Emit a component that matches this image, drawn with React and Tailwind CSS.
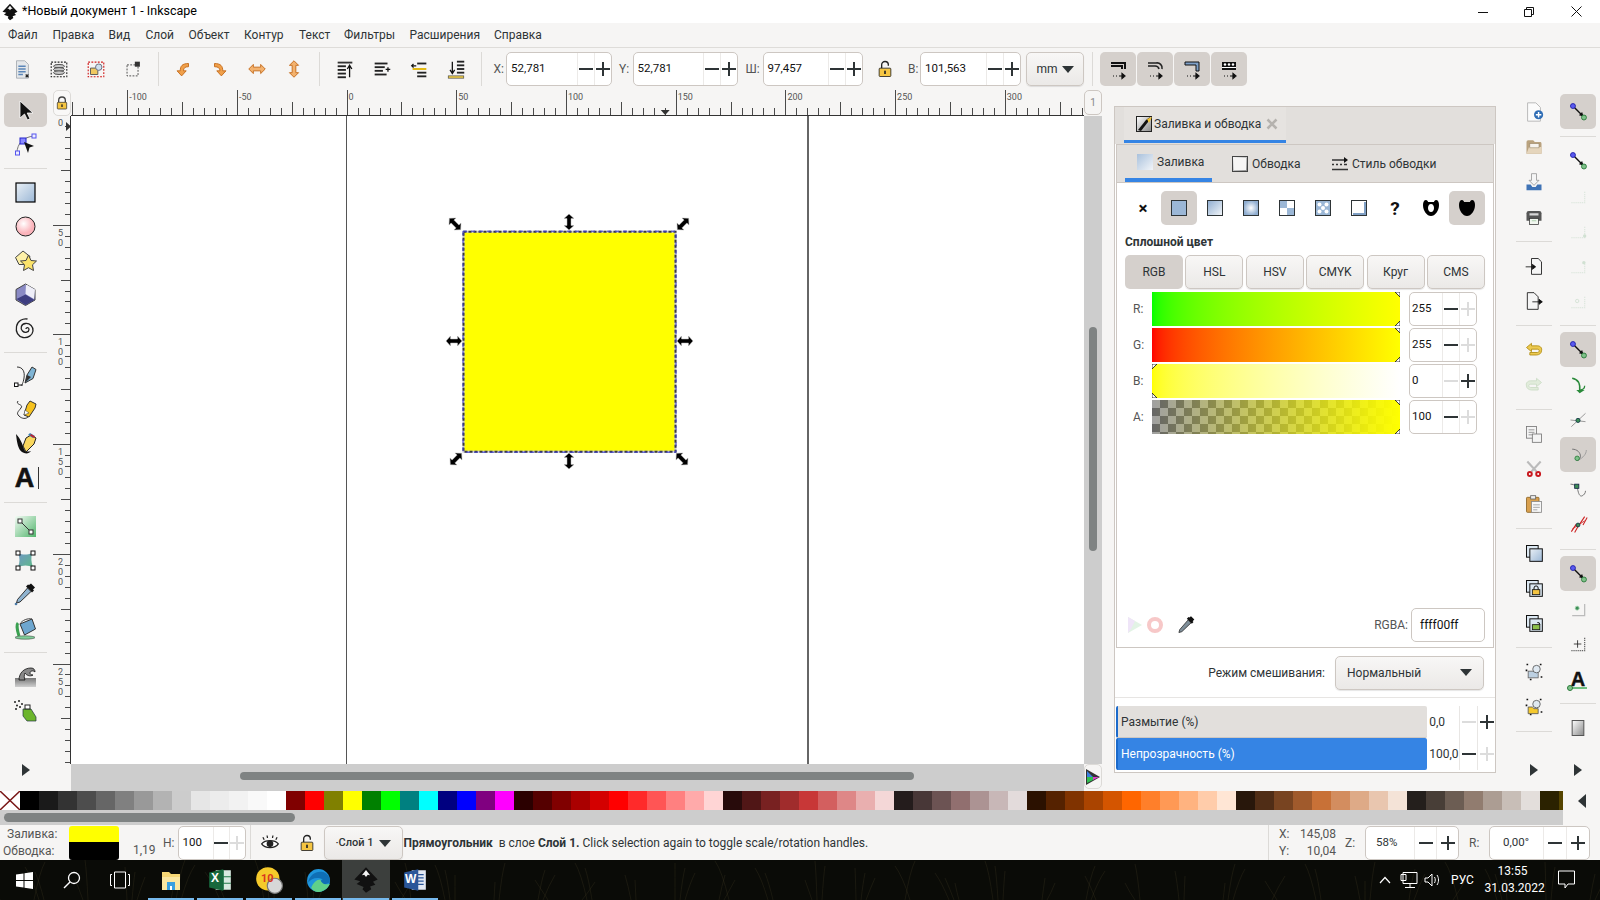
import React from "react";

const FONT = "[font-family:Roboto,sans-serif]";

// ---------- shared small drawings ----------
const Svg = ({ s = 24, children, className = "" }) => (
  <svg width={s} height={s} viewBox="0 0 24 24" className={`shrink-0 ${className}`}>
    {children}
  </svg>
);

const Defs = () => (
  <svg className="absolute w-0 h-0">
    <defs>
      <linearGradient id="blue" x1="0" y1="0" x2="1" y2="1">
        <stop offset="0" stopColor="#eaf0f6" />
        <stop offset="1" stopColor="#9bb7d6" />
      </linearGradient>
      <linearGradient id="lin" x1="0" y1="0" x2="1" y2="1">
        <stop offset="0" stopColor="#8fadd0" />
        <stop offset="1" stopColor="#f4f7fa" />
      </linearGradient>
      <radialGradient id="rad">
        <stop offset="0" stopColor="#ffffff" />
        <stop offset="1" stopColor="#8fadd0" />
      </radialGradient>
      <radialGradient id="pink" cx="0.4" cy="0.35">
        <stop offset="0" stopColor="#ffffff" />
        <stop offset="1" stopColor="#fbb4bb" />
      </radialGradient>
      <linearGradient id="grey" x1="0" y1="0" x2="1" y2="1">
        <stop offset="0" stopColor="#ffffff" />
        <stop offset="1" stopColor="#8a8a8a" />
      </linearGradient>
      <linearGradient id="green" x1="0" y1="0" x2="1" y2="1">
        <stop offset="0" stopColor="#f4fbf5" />
        <stop offset="1" stopColor="#52b56c" />
      </linearGradient>
      <linearGradient id="wave" x1="0" y1="0" x2="0" y2="1">
        <stop offset="0" stopColor="#777" />
        <stop offset="1" stopColor="#cfcfcf" />
      </linearGradient>
      <linearGradient id="teal" x1="0" y1="0" x2="1" y2="1">
        <stop offset="0" stopColor="#6f97c4" />
        <stop offset="1" stopColor="#5fb98a" />
      </linearGradient>
      <linearGradient id="tabfill" x1="0" y1="0" x2="1" y2="1">
        <stop offset="0" stopColor="#a9c1dc" />
        <stop offset="1" stopColor="#f2f5f9" />
      </linearGradient>
    </defs>
  </svg>
);

const Logo = ({ s = 18 }) => (
  <Svg s={s}>
    <path d="M12 1 22 11.500 18 13.500 20 16 15.500 17.500 16.500 20 12 23 9 20 10 18 4 15.500 7 13 2 11.500Z" fill="#111" />
    <path d="M12 3.500 15.500 8 13.500 7.500 12 9.500 10.500 7.500 8.500 8Z" fill="#f3f3f3" />
  </Svg>
);

const Lock = ({ open, s = 24 }) => (
  <Svg s={s}>
    {open ? (
      <path d="M8 11V7a4 4 0 0 1 8 0v1" fill="none" stroke="#222" strokeWidth="1.600" />
    ) : (
      <path d="M7 11V8a5 5 0 0 1 10 0v3" fill="none" stroke="#444" strokeWidth="2" />
    )}
    <rect x="5" y="11" width="14" height="10" rx="1" fill="#f5c542" stroke="#222" />
    <rect x="11" y="14" width="2" height="4" fill="#222" />
  </Svg>
);

const arrowDark = "#c46a1a";
const Tick = ({ x, y, w = 10, c = "#222", h = 2 }) => <rect x={x} y={y} width={w} height={h} fill={c} />;

// ---------- top tool bar ----------
const topIcons = [
  <Svg key="a" s={22}>
    <path d="M6 3h9l4 4v15H6z" fill="#e4e7ea" stroke="#a8aeb3" />
    <path d="M8 9h8M8 12h8M8 15h8M8 18h5" stroke="#5b86b8" strokeWidth="1.500" />
    <path d="M16 18l3 3M19 18l-3 3" stroke="#222" strokeWidth="1.200" />
  </Svg>,
  <Svg key="b" s={22}>
    <rect x="3.500" y="4.500" width="17" height="16" fill="none" stroke="#222" strokeWidth="1.200" strokeDasharray="2 1.500" />
    <ellipse cx="12" cy="9" rx="6" ry="2" fill="#c8c8c8" stroke="#444" />
    <ellipse cx="12" cy="12.500" rx="6" ry="2" fill="#c8c8c8" stroke="#444" />
    <ellipse cx="12" cy="16" rx="6" ry="2" fill="#c8c8c8" stroke="#444" />
  </Svg>,
  <Svg key="c" s={22}>
    <rect x="3.500" y="4.500" width="17" height="16" fill="none" stroke="#d01818" strokeWidth="1.200" strokeDasharray="2 1.500" />
    <path d="M6 11h6l2 2v5H6z" fill="#f0c860" stroke="#555" />
    <circle cx="15" cy="10" r="3.500" fill="#cfe0ee" stroke="#667" />
  </Svg>,
  <Svg key="d" s={22}>
    <rect x="5.500" y="7.500" width="12" height="12" fill="none" stroke="#444" strokeDasharray="2 1.500" />
    <rect x="14" y="4" width="5.500" height="5.500" fill="#333" />
  </Svg>,
  <Svg key="e" s={22}>
    <path d="M18 6C11 6 9 9 9 14H5.500l5 5.500 5-5.500H12.500C12.500 11 14 9.500 18 9.500Z" fill="#f0a04a" stroke={arrowDark} />
  </Svg>,
  <Svg key="f" s={22}>
    <path d="M6 6c7 0 9 3 9 8h3.500l-5 5.500-5-5.500h3.500C12 11 10 9.500 6 9.500Z" fill="#f0a04a" stroke={arrowDark} />
  </Svg>,
  <Svg key="g" s={22}>
    <path d="M3 12l5-5v3h8V7l5 5-5 5v-3H8v3z" fill="#f3b26e" stroke={arrowDark} />
  </Svg>,
  <Svg key="h" s={22}>
    <path d="M12 3l5 5h-3v8h3l-5 5-5-5h3V8H7z" fill="#f3b26e" stroke={arrowDark} />
  </Svg>,
  <Svg key="i" s={22}>
    <Tick x="4" y="4" w="16" c="#333" />
    <Tick x="4" y="8" w="9" /><Tick x="4" y="12" w="9" /><Tick x="4" y="16" w="9" /><Tick x="4" y="20" w="9" />
    <path d="M17 21V9M14.500 12 17 8l2.500 4" stroke="#111" strokeWidth="1.400" fill="none" />
  </Svg>,
  <Svg key="j" s={22}>
    <Tick x="4" y="5" w="14" /><Tick x="4" y="9" w="11" /><Tick x="4" y="13" w="9" /><Tick x="4" y="17" w="13" />
    <path d="M16 12.500h5M18.500 10v5" stroke="#111" strokeWidth="1.400" />
  </Svg>,
  <Svg key="k" s={22}>
    <Tick x="10" y="5" w="10" /><Tick x="5" y="11" w="15" c="#e0b400" /><Tick x="10" y="15" w="10" /><Tick x="10" y="19" w="10" />
    <path d="M9 8.500H4M6 6.500l-2 2 2 2" stroke="#111" strokeWidth="1.300" fill="none" />
  </Svg>,
  <Svg key="l" s={22}>
    <Tick x="13" y="3" w="8" /><Tick x="13" y="7" w="8" /><Tick x="13" y="11" w="8" /><Tick x="13" y="15" w="8" />
    <rect x="3.500" y="19.500" width="17" height="2.500" fill="#e8c84a" stroke="#333" strokeWidth=".6" />
    <path d="M8 4v12M5.500 13 8 17l2.500-4" stroke="#111" strokeWidth="1.400" fill="none" />
  </Svg>,
];

const snapArrow = <path d="M7 19h1M10 19h1M13 19h5M16 16.500l3 2.500-3 2.500z" stroke="#111" fill="#111" strokeWidth="1.200" />;
const layoutIcons = [
  <Svg key="a"><path d="M5 6h14v6M5 9h11v3" fill="none" stroke="#111" strokeWidth="2" />{snapArrow}</Svg>,
  <Svg key="b"><path d="M5 6h8a5 5 0 0 1 6 6M5 9h7a4 4 0 0 1 4 3" fill="none" stroke="#222" strokeWidth="1.600" />{snapArrow}</Svg>,
  <Svg key="c"><path d="M5 5h14v9h-3V8H5z" fill="#7fa0c8" stroke="#111" />{snapArrow}</Svg>,
  <Svg key="d"><path d="M5 5h14v8H5z" fill="#111" /><circle cx="8" cy="7.500" r="1.200" fill="#fff" /><circle cx="12" cy="7.500" r="1.200" fill="#fff" /><circle cx="16" cy="7.500" r="1.200" fill="#fff" /><path d="M5 10.500h14" stroke="#fff" />{snapArrow}</Svg>,
];

// ---------- left tools ----------
const toolIcons = [
  <Svg key="sel"><path d="M7 3v17l4.500-4 3 6 2.500-1.200-2.800-5.800H20z" fill="#111" stroke="#fff" strokeWidth=".8" /></Svg>,
  <Svg key="node">
    <path d="M4 21C4 12 10 5 21 4" fill="none" stroke="#777" />
    <rect x="2.500" y="19" width="4" height="4" fill="#eef" stroke="#55e" />
    <rect x="19" y="2" width="4" height="4" fill="#eef" stroke="#55e" />
    <rect x="7" y="6" width="6" height="6" fill="#88f" stroke="#22c" />
    <path d="M11 10 21 14l-4.500 1.500L15 21z" fill="#111" />
  </Svg>,
  "sep",
  <Svg key="rect"><rect x="3" y="3" width="19" height="19" fill="url(#blue)" stroke="#000" strokeWidth="1.200" /></Svg>,
  <Svg key="ell"><circle cx="12.500" cy="12.500" r="9.500" fill="url(#pink)" stroke="#222" /></Svg>,
  <Svg key="star">
    <path d="M2.500 9.500 10 3l7 5.500-3 8H6z" fill="#fdf0a8" stroke="#444" />
    <path d="m15.500 7 2.500 5.500 5.500.5-4 3.800 1 5.700-5-2.800-5 2.800 1-5.700-4-3.800 5.500-.5z" fill="#fbe36a" stroke="#444" />
  </Svg>,
  <Svg key="box">
    <path d="m12.500 2 9.500 5.500v10.500l-9.500 5.500-9.500-5.500V7.500z" fill="#8a8ac4" stroke="#444" />
    <path d="m12.500 2 9.500 5.500-1 9.500-8.500-5L13 2z" fill="#eeeef8" />
    <path d="M3.500 17 12.500 12.500l9 5.500-9 5z" fill="#3e3e80" />
  </Svg>,
  <Svg key="spiral"><path d="M13 13c0-2 3-2 3 .5s-4 4-6.500 1.500S8 8 12.500 7.500s8 3.500 7.500 7.500-5 7.500-10 6.500S2.500 16 3.500 10.500 10 2 14.500 3" fill="none" stroke="#222" strokeWidth="1.300" /></Svg>,
  "sep",
  <Svg key="pen">
    <path d="M4 3c6 0 8 5 7 11s-2 6-3 8" fill="none" stroke="#333" />
    <path d="M3 21h7" stroke="#222" />
    <rect x="1.500" y="19" width="3.500" height="3.500" fill="#fff" stroke="#111" />
    <path d="m12 19 2-8 5-8 4 2.500-3 9z" fill="#7fb4d4" stroke="#333" />
    <path d="m12 19 2-8 4 2z" fill="#333" />
  </Svg>,
  <Svg key="pencil">
    <path d="M5 3c-3 4 6 3 3 7s-5 5-2 8 7 3 9 1" fill="none" stroke="#333" />
    <path d="m11 17 3-10 3-4 6 3-1 4-6 9z" fill="#f6c21e" stroke="#333" />
    <path d="m11 17 1-5 4 3z" fill="#fff" stroke="#333" strokeWidth=".5" />
  </Svg>,
  <Svg key="call">
    <path d="M3 2c1 9 2 15 6 18 3 2 7 2 9-1-3 1-6 1-7-2S8 7 3 2Z" fill="#111" />
    <path d="m10 14 3-8 5-3 5 3-2 6-8 8z" fill="#f9d75e" stroke="#222" />
    <path d="m15 3 5 3 2-2-5-3z" fill="#3f7fb0" />
    <path d="m17 3.500 4 2.500 1-1.500-4-2.500z" fill="#c02030" />
  </Svg>,
  <span key="txt" className="relative flex items-center justify-center w-[24px] h-[24px]">
    <span className="text-[27px] leading-none font-black text-[#111] [font-family:'Liberation_Sans',sans-serif] [-webkit-text-stroke:0.6px_#111]">A</span>
    <span className="absolute right-[-2px] top-[1px] bottom-[1px] w-[1px] bg-[#333]" />
  </span>,
  "sep",
  <Svg key="grad">
    <rect x="2" y="2" width="21" height="21" fill="url(#green)" />
    <path d="M7 7 18 18" stroke="#333" />
    <rect x="5" y="5" width="4" height="4" fill="#fff" stroke="#333" />
    <rect x="16" y="16" width="4" height="4" fill="#fff" stroke="#333" />
  </Svg>,
  <Svg key="mesh">
    <path d="M5 5c5 2 9 2 14 0-1 5-1 9 1 14-5-2-10-2-15 0 2-5 2-9 0-14Z" fill="url(#teal)" />
    <rect x="3" y="3" width="4" height="4" fill="#fff" stroke="#111" />
    <rect x="18" y="3" width="4" height="4" fill="#fff" stroke="#111" />
    <rect x="3" y="18" width="4" height="4" fill="#fff" stroke="#111" />
    <rect x="18" y="18" width="4" height="4" fill="#fff" stroke="#111" />
  </Svg>,
  <Svg key="drop">
    <path d="m16 3 2-1.500 4 4L20 7.500l1 1-2 2-6-6 2-2z" fill="#111" />
    <path d="M14.500 6 18 9.500 7 20l-3.500 1 1-3.500z" fill="#8fb3d0" stroke="#333" />
    <circle cx="3" cy="22" r="1.300" fill="#4a7ba8" />
  </Svg>,
  <Svg key="bucket">
    <path d="M7 8 19 3l3.500 10-11 6z" fill="#6ea6cf" stroke="#333" />
    <path d="M5 7c-2 2 0 10 1 13" stroke="#3aa050" strokeWidth="3" fill="none" />
    <ellipse cx="12" cy="21.500" rx="10" ry="1.700" fill="#7fcf98" stroke="#333" strokeWidth=".5" />
    <path d="M7 8c2-4 8-6 12-5" fill="none" stroke="#444" />
  </Svg>,
  "sep",
  <Svg key="tweak">
    <rect x="2" y="14" width="21" height="9" fill="url(#wave)" />
    <path d="M6 16c0-7 5-12 12-12 3 0 4 2 4 4-2-2-5-1-5 1 0 1 1 2 3 2-3 2-7 0-8-2-1 2-1 5 0 7z" fill="#888" stroke="#111" strokeWidth=".8" />
  </Svg>,
  <Svg key="spray">
    <path d="M10 11h8l5 8v4h-9l-4-5z" fill="#6cb52c" stroke="#234" strokeWidth=".7" />
    <rect x="12" y="7" width="5" height="4" fill="#fff" stroke="#222" />
    <g fill="#222"><circle cx="2" cy="4" r="1" /><circle cx="6" cy="3" r="1" /><circle cx="9" cy="6" r="1" /><circle cx="4" cy="7.500" r="1" /><circle cx="3" cy="11" r="1" /><circle cx="7" cy="9" r="1" /></g>
  </Svg>,
];

// ---------- right tools ----------
const SnapNode = (
  <Svg key="snap" s={22}>
    <path d="M7 6 17 16" stroke="#111" strokeWidth="1.500" />
    <path d="m18 17-5-1.500 3.500-3.500z" fill="#111" />
    <circle cx="6.500" cy="5.500" r="2.700" fill="#5a5af0" stroke="#22a" />
    <circle cx="18.500" cy="18" r="2.700" fill="#7fc28a" stroke="#2a7a3a" />
  </Svg>
);
const dotted = (c = "#cfe0d2") => <path d="M4 20h16V6" fill="none" stroke={c} strokeWidth="1.500" strokeDasharray="1.500 1" />;

const cmdIcons = [
  <Svg key="new" s={22}>
    <path d="M5 2h9l5 5v15H5z" fill="#fbfbfb" stroke="#b5b5b5" />
    <circle cx="17" cy="15" r="5" fill="#2f6db5" />
    <path d="M14 15h6M17 12v6" stroke="#fff" strokeWidth="1.600" />
  </Svg>,
  <Svg key="open" s={20}>
    <path d="M3 6a2 2 0 0 1 2-2h6l2 2h7a2 2 0 0 1 1 2v12H3z" fill="#b9a27e" />
    <path d="M3 20 6 12h15v8z" fill="#e5d5bc" />
    <rect x="7" y="8" width="11" height="5" fill="#f6f3ee" stroke="#9a8768" strokeWidth=".7" />
  </Svg>,
  <Svg key="save" s={20}>
    <path d="M9 2h6v8h3l-6 6-6-6h3z" fill="#f5f5f5" stroke="#999" />
    <path d="M3 15h5l2 3h4l2-3h5v7H3z" fill="#3f73b5" />
  </Svg>,
  <Svg key="print" s={18}>
    <path d="M2 7a3 3 0 0 1 3-3h14a3 3 0 0 1 3 3v10H2z" fill="#555" />
    <rect x="6" y="7" width="12" height="3" fill="#d8d8d8" />
    <rect x="6" y="14" width="12" height="8" fill="#f2f7f0" stroke="#333" />
    <path d="M9 17h6" stroke="#9ac49a" />
  </Svg>,
  "sep",
  <Svg key="imp" s={20}>
    <path d="M9 3h8l4 4v15H9z" fill="#f5f5f5" stroke="#111" />
    <path d="M2 13h11M10 10l4 3-4 3z" stroke="#111" fill="#111" />
  </Svg>,
  <Svg key="exp" s={20}>
    <path d="M4 2h8l5 5v15H4z" fill="#f5f5f5" stroke="#111" />
    <path d="M10 13h11M18 10l4 3-4 3z" stroke="#111" fill="#111" />
  </Svg>,
  "sep",
  <Svg key="undo" s={20}>
    <path d="M3 9l6-5v3h7c4 0 6 3 5 6 0 3-3 5-6 5H7v-3h9c3 0 3-4 0-4H9v3z" fill="#ecc94f" stroke="#b08a10" />
  </Svg>,
  <Svg key="redo" s={20} className="opacity-40">
    <path d="M21 9l-6-5v3H8c-4 0-6 3-5 6 0 3 3 5 6 5h8v-3H8c-3 0-3-4 0-4h7v3z" fill="#c4e0b8" stroke="#8ab77e" />
  </Svg>,
  "sep",
  <Svg key="copy" s={20}>
    <rect x="3" y="3" width="12" height="14" fill="#f4f4f4" stroke="#777" />
    <path d="M5.500 7h7M5.500 10h7M5.500 13h5" stroke="#888" />
    <rect x="10" y="12" width="11" height="10" fill="#f4f4f4" stroke="#777" />
  </Svg>,
  <Svg key="cut" s={20}>
    <path d="M4 3 15 15M20 3 9 15" stroke="#bbb" strokeWidth="2.500" />
    <circle cx="7" cy="18" r="3.500" fill="#c8181e" /><circle cx="17" cy="18" r="3.500" fill="#c8181e" />
    <circle cx="7" cy="18" r="1.200" fill="#fff" /><circle cx="17" cy="18" r="1.200" fill="#fff" />
  </Svg>,
  <Svg key="paste" s={20}>
    <rect x="3" y="4" width="15" height="18" rx="1" fill="#d9a04e" stroke="#8a6324" />
    <rect x="8" y="2" width="6" height="4" fill="#eee" stroke="#666" />
    <rect x="9" y="9" width="12" height="13" fill="#f7f7f7" stroke="#888" />
    <path d="M11 13h8M11 16h8M11 19h5" stroke="#999" />
  </Svg>,
  "sep",
  <Svg key="dup" s={20}>
    <rect x="3" y="3" width="14" height="14" fill="#dce8f2" stroke="#111" strokeWidth="1.200" />
    <rect x="7" y="7" width="15" height="15" fill="url(#blue)" stroke="#111" strokeWidth="1.200" />
  </Svg>,
  <Svg key="clone" s={20}>
    <rect x="3" y="3" width="14" height="14" fill="#dce8f2" stroke="#111" strokeWidth="1.200" />
    <rect x="7" y="7" width="15" height="15" fill="#dce8f2" stroke="#111" strokeWidth="1.200" />
    <rect x="10" y="14" width="9" height="6" fill="#f5c542" stroke="#111" />
    <path d="M12 14v-2a2.500 2.500 0 0 1 5 0v2" fill="none" stroke="#111" strokeWidth="1.200" />
  </Svg>,
  <Svg key="unlink" s={20}>
    <rect x="3" y="3" width="14" height="14" fill="#dce8f2" stroke="#111" strokeWidth="1.200" />
    <rect x="7" y="7" width="15" height="15" fill="#dce8f2" stroke="#111" strokeWidth="1.200" />
    <rect x="10" y="14" width="9" height="6" fill="#8cc04a" stroke="#111" />
    <path d="M16 11.500a2.500 2.500 0 0 1 3 2.500" fill="none" stroke="#111" strokeWidth="1.200" />
  </Svg>,
  "sep",
  <Svg key="zs" s={20}>
    <rect x="3" y="3" width="18" height="18" fill="none" stroke="#111" strokeDasharray="2 14" strokeWidth="2" />
    <rect x="5" y="11" width="12" height="8" fill="#bcd0e2" stroke="#666" />
    <circle cx="15" cy="8.500" r="4.500" fill="#dfe9f2" stroke="#555" />
  </Svg>,
  <Svg key="zd" s={20}>
    <rect x="3" y="3" width="18" height="18" fill="none" stroke="#111" strokeDasharray="2 14" strokeWidth="2" />
    <path d="M5 12h5l2 2h5v6H5z" fill="#f5c92e" stroke="#555" />
    <circle cx="15" cy="8.500" r="4.500" fill="#dfe9f2" stroke="#555" />
  </Svg>,
  "sep",
];

const snapIcons = [
  { on: true, i: SnapNode },
  "sep",
  { i: SnapNode },
  { i: <Svg key="s1" s={20} className="opacity-60">{dotted()}</Svg> },
  { i: <Svg key="s2" s={20} className="opacity-60">{dotted()}<circle cx="20" cy="18" r="2" fill="#b9d4bd" /></Svg> },
  { i: <Svg key="s3" s={20} className="opacity-60">{dotted()}<circle cx="19" cy="8" r="2" fill="#b9d4bd" /></Svg> },
  { i: <Svg key="s4" s={20} className="opacity-60">{dotted()}<circle cx="11" cy="12" r="2" fill="none" stroke="#b9d4bd" /></Svg> },
  "sep",
  { on: true, i: SnapNode },
  { i: <Svg key="s5" s={20}><path d="M5 4c6 1 10 6 9 15" fill="none" stroke="#2a8a3a" strokeWidth="1.800" /><path d="M10 18h10l-6 4z" fill="#2a8a3a" /><path d="M14 18c4 0 6-2 6-5" fill="none" stroke="#2a8a3a" strokeWidth="1.500" /></Svg> },
  { i: <Svg key="s6" s={20}><path d="M4 20 21 4" stroke="#888" /><path d="M3 12 21 14" stroke="#888" /><circle cx="12" cy="12.500" r="2.500" fill="#3c8f56" stroke="#134" /></Svg> },
  { on: true, i: <Svg key="s7" s={20}><path d="M5 5c6 0 10 4 10 9-1 4-3 5-5 4" fill="none" stroke="#777" strokeWidth="1.200" /><path d="M22 6c0 5-4 9-9 12" fill="none" stroke="#999" /><circle cx="11" cy="16" r="2.700" fill="#7fc28a" stroke="#2a7a3a" /></Svg> },
  { i: <Svg key="s8" s={20}><path d="M3 5c5 0 8 3 9 8s3 7 5 6 4-3 4-6" fill="none" stroke="#777" strokeWidth="1.200" /><rect x="8" y="5" width="5" height="5" fill="#3c8f56" stroke="#124" /></Svg> },
  { i: <Svg key="s9" s={20}><path d="m4 20 6-9M8 21l5-9M14 11l6-9M18 12l5-9" stroke="#c22" strokeWidth="1.300" /><path d="M5 17 20 7" stroke="#c22" /><circle cx="12" cy="12" r="2.300" fill="#3c8f56" stroke="#134" /></Svg> },
  "sep",
  { on: true, i: SnapNode },
  { i: <Svg key="s10" s={20}><path d="M5 20h15V6" fill="none" stroke="#bbb" strokeWidth="1.500" /><circle cx="11" cy="11" r="2.500" fill="#3c8f56" stroke="#bfe0c5" /></Svg> },
  { i: <Svg key="s11" s={20}><path d="M4 20h16V4" fill="none" stroke="#666" strokeWidth="1.500" strokeDasharray="1.500 1" /><path d="M7 12h9M11.500 7.500v9" stroke="#222" /></Svg> },
  { i: <span key="s12" className="relative flex items-center justify-center w-[22px] h-[22px]"><span className="text-[20px] leading-none font-black text-[#111] [font-family:'Liberation_Sans',sans-serif] [-webkit-text-stroke:0.4px_#111]">A</span><span className="absolute left-[2px] right-[2px] bottom-[1px] h-[2px] bg-[#6fbf80]" /><span className="absolute left-[0px] bottom-[-1px] w-[6px] h-[6px] rounded-full border border-[#2a7a3a] bg-[#7fc28a]" /></span> },
  "sep",
  { i: <Svg key="s13" s={20}><rect x="5" y="3" width="14" height="18" fill="url(#grey)" stroke="#555" strokeWidth="1.200" /></Svg> },
];

// ---------- reusable bits ----------
const Pm = ({ plus, dim }) => (
  <svg width="14" height="14" viewBox="0 0 14 14">
    <path d={plus ? "M0 7h14M7 0v14" : "M0 7h14"} stroke={dim ? "#dcdcdc" : "#2e3436"} strokeWidth="2" />
  </svg>
);

function Spin({ value, w, cell, h = "h-[34px]", minusDim, plusDim, pad = "pl-[4px]", text = "text-[#111]" }) {
  return (
    <div className={`flex ${w} ${h} shrink-0 bg-white border border-[#cdc7c2] rounded-[5px]`}>
      <div className={`flex-1 flex items-center ${pad} ${text} text-[11.500px] overflow-hidden`}>{value}</div>
      <div className={`${cell} border-l border-[#eceae8] flex items-center justify-center`}><Pm dim={minusDim} /></div>
      <div className={`${cell} border-l border-[#eceae8] flex items-center justify-center`}><Pm plus dim={plusDim} /></div>
    </div>
  );
}

const Btn = ({ className = "", children }) => (
  <div className={`flex items-center border border-[#cdc7c2] rounded-[5px] bg-gradient-to-b from-[#f8f7f6] to-[#ebe9e7] shadow-[0_1px_1px_rgba(0,0,0,0.1)] text-[#2e3436] ${className}`}>
    {children}
  </div>
);

const Caret = () => (
  <svg width="12" height="7" viewBox="0 0 12 7"><path d="M0 0h12L6 7z" fill="#2e3436" /></svg>
);

const VSep = ({ w }) => (
  <div className={`${w} h-[34px] flex items-center justify-center shrink-0`}>
    <div className="w-[1px] h-full bg-[#dcdad7]" />
  </div>
);

const HSep = ({ w = "w-[36px]" }) => (
  <div className="h-[14px] flex items-center justify-center shrink-0">
    <div className={`${w} h-[1px] bg-[#dcdad7]`} />
  </div>
);

const MoreArrow = () => (
  <svg width="8" height="12" viewBox="0 0 8 12"><path d="M0 0l8 6-8 6z" fill="#2e3436" /></svg>
);

// ---------- bars ----------
function TitleBar() {
  return (
    <div className="h-[23px] bg-white flex items-center text-[12.500px] text-black shrink-0">
      <div className="w-[22px] pl-[1px] flex"><Logo /></div>
      <div>*Новый документ 1 - Inkscape</div>
      <div className="ml-auto flex items-center">
        <div className="w-[46px] flex justify-center"><svg width="10" height="10"><path d="M0 5.500h10" stroke="#111" /></svg></div>
        <div className="w-[46px] flex justify-center"><svg width="10" height="10"><path d="M.5 2.500h7v7h-7zM2.500 2.500v-2h7v7h-2" fill="none" stroke="#111" /></svg></div>
        <div className="w-[48px] flex justify-center"><svg width="11" height="11"><path d="M.5.500l10 10M10.500.500l-10 10" stroke="#111" /></svg></div>
      </div>
    </div>
  );
}

function MenuBar() {
  const items = [
    ["Файл", "w-[44.500px]"], ["Правка", "w-[56px]"], ["Вид", "w-[37px]"], ["Слой", "w-[43px]"], ["Объект", "w-[55.500px]"],
    ["Контур", "w-[55px]"], ["Текст", "w-[45px]"], ["Фильтры", "w-[65.500px]"], ["Расширения", "w-[84.500px]"], ["Справка", "w-[60px]"],
  ];
  return (
    <div className="h-[25px] bg-[#f6f5f4] border-b border-[#dedcd9] flex items-center pl-[8px] text-[12px] text-[#2e3436] shrink-0">
      {items.map(([t, w]) => (
        <div key={t} className={w}>{t}</div>
      ))}
    </div>
  );
}

const Ico = ({ children }) => <div className="w-[37px] h-[34px] flex items-center justify-center shrink-0">{children}</div>;
const Lbl = ({ w, children }) => <div className={`${w} shrink-0 text-[12px] text-[#555] pl-[5px]`}>{children}</div>;

function TopBar() {
  const cell = "w-[17px]";
  return (
    <div className="h-[42px] bg-[#f6f5f4] flex items-center pl-[3.500px] shrink-0">
      {topIcons.slice(0, 4).map((x, i) => <Ico key={i}>{x}</Ico>)}
      <VSep w="w-[13px]" />
      {topIcons.slice(4, 8).map((x, i) => <Ico key={i}>{x}</Ico>)}
      <VSep w="w-[14px]" />
      {topIcons.slice(8).map((x, i) => <Ico key={i}>{x}</Ico>)}
      <VSep w="w-[14px]" />
      <Lbl w="w-[17.500px]">X:</Lbl>
      <Spin value="52,781" w="w-[106px]" cell={cell} />
      <div className="w-[20.500px] shrink-0 text-[12px] text-[#555] pl-[7px]">Y:</div>
      <Spin value="52,781" w="w-[105px]" cell={cell} />
      <div className="w-[25px] shrink-0 text-[12px] text-[#555] pl-[8px]">Ш:</div>
      <Spin value="97,457" w="w-[100px]" cell={cell} />
      <div className="w-[45.500px] flex justify-center shrink-0"><Lock open s={20} /></div>
      <div className="w-[12px] shrink-0 text-[12px] text-[#555]">В:</div>
      <Spin value="101,563" w="w-[101px]" cell={cell} />
      <Btn className="w-[58px] h-[34px] ml-[5px] justify-center gap-[4px] text-[12px] shrink-0">mm <Caret /></Btn>
      <VSep w="w-[16px]" />
      <div className="flex gap-[1px]">
        {layoutIcons.map((x, i) => (
          <div key={i} className="w-[36px] h-[34px] rounded-[5px] bg-[#d5d0cc] flex items-center justify-center">{x}</div>
        ))}
      </div>
    </div>
  );
}

function Toolbox() {
  return (
    <div className="w-[53px] bg-[#f6f5f4] flex flex-col pt-[3px] shrink-0">
      {toolIcons.map((x, i) =>
        x === "sep" ? (
          <div key={i} className="h-[14px] flex items-center pl-[4px]"><div className="w-[43px] h-[1px] bg-[#dcdad7]" /></div>
        ) : (
          <div key={i} className={`ml-[4px] w-[43px] h-[34px] flex items-center justify-center pr-[2px] rounded-[5px] ${i === 0 ? "bg-[#d5d0cc]" : ""}`}>{x}</div>
        )
      )}
      <div className="mt-auto mb-[15px] ml-[4px] w-[43px] flex justify-center"><MoreArrow /></div>
    </div>
  );
}

// ---------- rulers ----------
const UNIT = 2.194;
function HRuler() {
  const ticks = [];
  for (let u = -125; u <= 335; u += 5) {
    const x = 275.6 + u * UNIT;
    const top = u % 50 === 0 ? 0 : u % 25 === 0 ? 12 : 18;
    ticks.push(<path key={u} d={`M${Math.round(x) + 0.5} ${top}V25`} stroke="#4a4a4a" />);
    if (u % 50 === 0) {
      ticks.push(
        <text key={`t${u}`} x={x + 2} y="10" fontSize="9" fill="#555">{u}</text>
      );
    }
  }
  return (
    <svg width="1013" height="26" className="block">
      {ticks}
      <path d="M0 25.500H1013" stroke="#333" />
      <path d="M589.700 20h9l-4.500 5z" fill="#333" />
    </svg>
  );
}

function VRuler() {
  const ticks = [];
  for (let u = 0; u <= 295; u += 5) {
    const y = -1 + u * UNIT;
    const left = u % 50 === 0 ? 0 : u % 25 === 0 ? 8 : 12;
    ticks.push(<path key={u} d={`M${left} ${Math.round(y) + 0.5}H18`} stroke="#4a4a4a" />);
    if (u % 50 === 0) {
      String(u).split("").forEach((d, i) => {
        ticks.push(<text key={`t${u}${i}`} x="5" y={y + 11 + i * 10} fontSize="9" fill="#555">{d}</text>);
      });
    }
  }
  return (
    <svg width="18" height="648" className="block shrink-0">
      {ticks}
      <path d="M17.500 0V648" stroke="#333" />
      <path d="M13 6v9l5-4.500z" fill="#333" />
    </svg>
  );
}

const Handle = ({ x, y, r = 0 }) => (
  <g transform={`translate(${x} ${y}) rotate(${r})`}>
    <path d="M-8 0-3.500-5v3H3.500V-5L8 0 3.500 5V2H-3.500V5Z" fill="#000" stroke="#bbb" strokeWidth=".5" />
  </g>
);

function Canvas() {
  return (
    <div className="relative flex-1 bg-white overflow-hidden">
      <svg width="1013" height="648" className="absolute inset-0">
        <path d="M275.500 0V648" stroke="#555" />
        <path d="M737 0V648" stroke="#666" strokeWidth="2" />
        <rect x="392.500" y="115.700" width="212" height="220" fill="#ffff00" stroke="#c8c8d8" strokeWidth="2" />
        <rect x="392.500" y="115.700" width="212" height="220" fill="none" stroke="#3a3a3a" strokeWidth="2" strokeDasharray="3 2" />
        <rect x="392" y="115.200" width="213" height="221" fill="none" stroke="#4040d0" strokeDasharray="4 4" />
        <Handle x={384} y={108} r={45} />
        <Handle x={498} y={106} r={90} />
        <Handle x={612} y={108} r={-45} />
        <Handle x={383} y={225} />
        <Handle x={614} y={225} />
        <Handle x={385} y={343} r={-45} />
        <Handle x={498} y={345} r={90} />
        <Handle x={611} y={343} r={45} />
      </svg>
    </div>
  );
}

function WorkArea() {
  return (
    <div className="w-[1049px] flex flex-col shrink-0 bg-[#f6f5f4]">
      <div className="flex h-[26px]">
        <div className="w-[18px] h-[26px] border border-[#dcdad7] rounded-[5px] flex items-center justify-center bg-[#f9f8f7]"><Lock s={16} /></div>
        <HRuler />
        <div className="w-[18px] h-[25px] border border-[#cdc7c2] rounded-[5px] flex items-center justify-center text-[10px] text-[#888]">1</div>
      </div>
      <div className="flex h-[648px]">
        <VRuler />
        <Canvas />
        <div className="w-[18px] bg-[#cdcdcd] relative shrink-0">
          <div className="absolute left-[5px] top-[211px] w-[8px] h-[224px] rounded-full bg-[#7f8383]" />
        </div>
      </div>
      <div className="flex h-[27px]">
        <div className="w-[18px]" />
        <div className="flex-1 bg-[#cdcdcd] relative">
          <div className="absolute left-[169px] top-[8px] w-[674px] h-[8px] rounded-full bg-[#7f8383]" />
        </div>
        <div className="w-[18px] h-[25px] flex items-center justify-center border border-[#dcdad7] rounded-[5px]">
          <svg width="14" height="16" viewBox="0 0 14 16">
            <path d="M0 0 14 8 0 16Z" fill="#333" />
            <path d="M1 2 7 8H1Z" fill="#3b7fe0" />
            <path d="M7 8 13 8 7 11Z" fill="#e03bd0" />
            <path d="M1 8H7V11L1 14Z" fill="#30c050" />
          </svg>
        </div>
      </div>
    </div>
  );
}

// ---------- fill and stroke panel ----------
const paintIcons = [
  <span key="x" className="text-[17px] font-bold leading-none text-[#111]">×</span>,
  <svg key="f" width="16" height="16"><rect x=".5" y=".5" width="15" height="15" fill="#9bb7d6" stroke="#2e3436" /></svg>,
  <svg key="l" width="16" height="16"><rect x=".5" y=".5" width="15" height="15" fill="url(#lin)" stroke="#2e3436" /></svg>,
  <svg key="r" width="16" height="16"><rect x=".5" y=".5" width="15" height="15" fill="url(#rad)" stroke="#2e3436" /></svg>,
  <svg key="p" width="16" height="16"><rect x=".5" y=".5" width="15" height="15" fill="#fff" stroke="#2e3436" /><rect x="1" y="1" width="7" height="7" fill="#9bb7d6" /><rect x="8" y="8" width="7" height="7" fill="#9bb7d6" /></svg>,
  <svg key="m" width="16" height="16"><rect x=".5" y=".5" width="15" height="15" fill="#9bb7d6" stroke="#2e3436" /><g fill="#fff"><circle cx="4.500" cy="4.500" r="2" /><circle cx="11.500" cy="4.500" r="2" /><circle cx="8" cy="8" r="2" /><circle cx="4.500" cy="11.500" r="2" /><circle cx="11.500" cy="11.500" r="2" /></g></svg>,
  <svg key="s" width="16" height="16"><rect x=".5" y=".5" width="15" height="15" fill="#fff" stroke="#2e3436" /><path d="M14 2v12H2" fill="none" stroke="#7f9fc4" strokeWidth="2" /></svg>,
  <span key="q" className="text-[19px] font-bold leading-none text-[#111]">?</span>,
  <svg key="e" width="16" height="16" viewBox="0 0 16 16"><path d="M3 0C1 0 0 2 0 5c0 6 4 11 8 11s8-5 8-11c0-3-1-5-3-5-1 0-2 1-2 2H5C5 1 4 0 3 0Z" fill="#000" /><path d="M8 4c-2 0-3 2-3 4s1 4 3 4 3-2 3-4-1-4-3-4Z" fill="#fff" /></svg>,
  <svg key="n" width="16" height="16" viewBox="0 0 16 16"><path d="M3 0C1 0 0 2 0 5c0 6 4 11 8 11s8-5 8-11c0-3-1-5-3-5-1 0-2 1-2 2H5C5 1 4 0 3 0Z" fill="#000" /></svg>,
];

const Corner = ({ pos, d }) => (
  <svg width="5" height="5" viewBox="0 0 5 5" className={`absolute ${pos}`}>
    <path d={`${d}Z`} fill="#fff" stroke="#111" strokeWidth=".8" />
  </svg>
);

function Slider({ label, value, bg, left, minusDim, plusDim, checker }) {
  return (
    <div className="flex h-[34px] mb-[2px] items-center">
      <div className="w-[27px] pl-[8px] text-[12px] text-[#555]">{label}</div>
      <div className={`relative w-[248px] h-[34px] ${checker ? "bg-[repeating-conic-gradient(#666666_0%_25%,#a0a0a0_0%_50%)] bg-[length:16px_16px]" : ""}`}>
        <div className={`absolute inset-0 ${bg}`} />
        {left ? (
          <>
            <Corner pos="left-0 top-0" d="M0 0H5L0 5" />
            <Corner pos="left-0 bottom-0" d="M0 0 5 5H0" />
          </>
        ) : (
          <>
            <Corner pos="right-0 top-0" d="M0 0H5V5" />
            <Corner pos="right-0 bottom-0" d="M5 0V5H0" />
          </>
        )}
      </div>
      <div className="ml-[9px]">
        <Spin value={value} w="w-[68px]" cell="w-[17px]" minusDim={minusDim} plusDim={plusDim} pad="pl-[2px]" />
      </div>
    </div>
  );
}

function Bar({ label, active, value, minusDim, plusDim }) {
  return (
    <div className="flex h-[32px]">
      <div className={`w-[312px] h-full flex items-center pl-[3px] text-[12px] rounded-[2px] border-l-2 ${active ? "bg-[#3584e4] text-white border-[#1b6acb]" : "bg-[#e2dfdc] text-[#2e3436] border-[#1b6acb] border-b border-b-[#cdc7c2]"}`}>
        {label}
      </div>
      <div className="w-[32px] pl-[2px] flex items-center text-[12px] text-[#2e3436]">{value}</div>
      <div className="w-[18px] border-l border-[#e8e6e4] flex items-center justify-center"><Pm dim={minusDim} /></div>
      <div className="w-[18px] border-l border-[#e8e6e4] flex items-center justify-center"><Pm plus dim={plusDim} /></div>
    </div>
  );
}

function Panel() {
  return (
    <div className="w-[411px] shrink-0 bg-[#f6f5f4] pt-[16px] pl-[12px]">
      <div className="w-[382px] h-[667px] border border-[#cdc7c2] bg-white flex flex-col">
        <div className="h-[37px] bg-[#e2dfdc] pl-[9px] shrink-0">
          <div className="w-[162px] h-[36px] bg-[#e6e3e0] border-b-[3px] border-[#3584e4] flex items-center text-[12px] text-[#2e3436] pl-[12px]">
            <svg width="16" height="18" viewBox="0 0 16 18" className="mr-[2px]">
              <rect x=".5" y="1.500" width="15" height="15" fill="url(#grey)" stroke="#222" />
              <path d="M2 15 10 5l4-3-2 5-7 9z" fill="#111" />
              <path d="M11 4l5-2-3 6z" fill="#f2c230" />
            </svg>
            <span>Заливка и обводка</span>
            <svg width="12" height="12" className="ml-[5px]"><path d="M1.500 1.500l9 9M10.500 1.500l-9 9" stroke="#b5b2ae" strokeWidth="2.500" /></svg>
          </div>
        </div>
        <div className="mx-[1px] h-[504px] border border-[#cdc7c2] flex flex-col shrink-0">
          <div className="h-[38px] bg-[#e2dfdc] border-b border-[#cdc7c2] flex pl-[8px] text-[12px] text-[#2e3436] shrink-0">
            <div className="w-[87px] h-[37px] border-b-[4px] border-[#3584e4] flex items-center pl-[12px] gap-[4px]">
              <svg width="16" height="16"><rect width="16" height="16" fill="url(#tabfill)" /></svg>Заливка
            </div>
            <div className="w-[120px] h-[37px] flex items-center pl-[20px] gap-[4px]">
              <svg width="16" height="16"><rect x=".5" y=".5" width="15" height="15" fill="url(#grey)" stroke="#444" /><rect x="2" y="2" width="12" height="12" fill="#f6f5f4" /></svg>Обводка
            </div>
            <div className="h-[37px] flex items-center gap-[4px]">
              <svg width="16" height="16"><path d="M0 4h13M0 8.500h2M4 8.500h2M8 8.500h2M12 8.500h3M0 13.500h16" stroke="#333" strokeWidth="1.300" /><path d="M12 1l4 3-4 3z" fill="#111" /></svg>Стиль обводки
            </div>
          </div>
          <div className="flex-1 flex flex-col px-[8px] pb-[5px]">
            <div className="flex mt-[8px] h-[34px]">
              {paintIcons.map((x, i) => (
                <div key={i} className={`w-[36px] h-[34px] flex items-center justify-center rounded-[5px] ${i === 1 || i === 9 ? "bg-[#d5d0cc]" : ""}`}>{x}</div>
              ))}
            </div>
            <div className="mt-[9px] h-[16px] flex items-center text-[12px] font-bold text-[#2e3436]">Сплошной цвет</div>
            <div className="mt-[5px] grid grid-cols-6 gap-[2.400px] h-[34px]">
              {["RGB", "HSL", "HSV", "CMYK", "Круг", "CMS"].map((t, i) =>
                i === 0 ? (
                  <div key={t} className="flex items-center justify-center rounded-[5px] bg-[#d5d0cc] text-[12px] text-[#2e3436]">{t}</div>
                ) : (
                  <Btn key={t} className="justify-center text-[12px]">{t}</Btn>
                )
              )}
            </div>
            <div className="mt-[3px]">
              <Slider label="R:" value="255" bg="bg-gradient-to-r from-[#00ff00] to-[#ffff00]" plusDim />
              <Slider label="G:" value="255" bg="bg-gradient-to-r from-[#ff0000] to-[#ffff00]" plusDim />
              <Slider label="B:" value="0" bg="bg-gradient-to-r from-[#ffff00] to-[#ffffff]" left minusDim />
              <Slider label="A:" value="100" bg="bg-gradient-to-r from-[#ffff0000] to-[#ffff00]" checker plusDim />
            </div>
            <div className="mt-auto flex items-center h-[34px]">
              <svg width="16" height="18" viewBox="0 0 16 18" className="ml-[2px] opacity-60">
                <path d="M1 1 15 9 1 17Z" fill="#d0ecd4" />
                <path d="M1 1 8 5 4 13 1 17Z" fill="#e6d4f4" />
              </svg>
              <svg width="16" height="16" className="ml-[4px]"><circle cx="8" cy="8" r="6" fill="none" stroke="#f7c8c8" strokeWidth="4" /></svg>
              <div className="ml-[13px]"><Svg s={20}><path d="m16 3 2-1.500 4 4L20 7.500l1 1-2 2-6-6 2-2z" fill="#111" /><path d="M14.500 6 18 9.500 7 20l-3.500 1 1-3.500z" fill="#7f8f9a" stroke="#333" /></Svg></div>
              <div className="ml-auto mr-[3px] text-[12px] text-[#555]">RGBA:</div>
              <div className="w-[74px] h-[34px] bg-white border border-[#cdc7c2] rounded-[5px] flex items-center pl-[8px] text-[12px] text-[#111]">ffff00ff</div>
            </div>
          </div>
        </div>
        <div className="h-[50px] border-b border-[#e7e5e3] flex items-center justify-end pr-[11px] shrink-0">
          <div className="text-[12px] text-[#2e3436] mr-[10px]">Режим смешивания:</div>
          <Btn className="w-[149px] h-[34px] justify-between px-[11px] text-[12px]">Нормальный <Caret /></Btn>
        </div>
        <div className="pt-[8px] pl-[1px]">
          <Bar label="Размытие (%)" value="0,0" minusDim />
          <Bar label="Непрозрачность (%)" value="100,0" active plusDim />
        </div>
      </div>
    </div>
  );
}

function RightBars() {
  return (
    <div className="flex-1 flex bg-[#f6f5f4] pt-[4px]">
      <div className="w-[38px] ml-[2px] flex flex-col">
        {cmdIcons.map((x, i) =>
          x === "sep" ? (
            <HSep key={i} />
          ) : (
            <div key={i} className="h-[35px] flex items-center justify-center shrink-0">{x}</div>
          )
        )}
        <div className="mt-auto mb-[15px] flex justify-center"><MoreArrow /></div>
      </div>
      <div className="w-[36px] ml-[7px] flex flex-col">
        {snapIcons.map((x, i) =>
          x === "sep" ? (
            <HSep key={i} />
          ) : (
            <div key={i} className={`h-[35px] flex items-center justify-center rounded-[5px] shrink-0 ${x.on ? "bg-[#d5d0cc]" : ""}`}>{x.i}</div>
          )
        )}
        <div className="mt-auto mb-[15px] flex justify-center"><MoreArrow /></div>
      </div>
    </div>
  );
}

// ---------- palette ----------
const swatches = [
  "000000", "1a1a1a", "333333", "4d4d4d", "666666", "808080", "999999", "b3b3b3", "cccccc", "e6e6e6", "ececec", "f2f2f2", "f9f9f9", "ffffff",
  "800000", "ff0000", "808000", "ffff00", "008000", "00ff00", "008080", "00ffff", "000080", "0000ff", "800080", "ff00ff",
  "2b0000", "550000", "800000", "aa0000", "d40000", "ff0000", "ff2a2a", "ff5555", "ff8080", "ffaaaa", "ffd5d5",
  "280b0b", "501616", "782121", "a02c2c", "c83737", "d35f5f", "de8787", "e9afaf", "f4d7d7",
  "241c1c", "483737", "6c5353", "916f6f", "ac9393", "c8b7b7", "e3dbdb",
  "2b1100", "552200", "803300", "aa4400", "d45500", "ff6600", "ff7f2a", "ff9955", "ffb380", "ffccaa", "ffe6d5",
  "28170b", "502d16", "784421", "a05a2c", "c87137", "d38d5f", "deaa87", "e9c6af", "f4e3d7",
  "241f1c", "483e37", "6c5d53", "917c6f", "ac9d93", "c8beb7", "e3dedb",
  "2b2200",
];

function Palette() {
  return (
    <div className="h-[19px] flex bg-[#f6f5f4] shrink-0">
      <svg width="20" height="19" className="shrink-0"><rect width="20" height="19" fill="#fff" /><path d="M0 0l20 19M20 0 0 19" stroke="#7a1818" strokeWidth="1.500" /></svg>
      {swatches.map((c, i) => (
        <div key={i} className="w-[19px] h-[19px] shrink-0" style={{ background: `#${c}` }} />
      ))}
      <div className="w-[4px] h-[19px] bg-[#554400] shrink-0" />
      <div className="flex-1 flex items-center justify-center">
        <svg width="8" height="14" viewBox="0 0 8 14"><path d="M8 0 0 7l8 7z" fill="#2e3436" /></svg>
      </div>
    </div>
  );
}

function PaletteScroll() {
  return (
    <div className="h-[15px] flex bg-[#f6f5f4] shrink-0">
      <div className="w-[1563px] bg-[#cdcdcd] pl-[4px] pt-[3px]">
        <div className="w-[291px] h-[9px] rounded-full bg-[#7f8383]" />
      </div>
    </div>
  );
}

// ---------- status bar ----------
function StatusBar() {
  return (
    <div className="h-[35px] bg-[#f6f5f4] flex text-[12px] text-[#2e3436] shrink-0">
      <div className="w-[69px] shrink-0 flex flex-col text-[#555]">
        <div className="h-[17px] pl-[7px] flex items-center">Заливка:</div>
        <div className="h-[18px] pl-[3px] flex items-center">Обводка:</div>
      </div>
      <div className="w-[50px] shrink-0 flex flex-col pt-[1px]">
        <div className="h-[16px] bg-[#ffff00] rounded-t-[3px]" />
        <div className="h-[18px] bg-[#000000] rounded-b-[3px]" />
      </div>
      <div className="w-[44px] pl-[14px] shrink-0 flex items-end pb-[1px] text-[#555]">1,19</div>
      <div className="w-[14.500px] shrink-0 flex items-center text-[#555]">H:</div>
      <div className="pt-[1px]"><Spin value="100" w="w-[68px]" h="h-[34px]" cell="w-[16px]" plusDim /></div>
      <div className="w-[1px] h-[34px] bg-[#dcdad7] ml-[4px] shrink-0" />
      <div className="w-[39px] flex items-center justify-center shrink-0">
        <Svg s={20}>
          <path d="M2 13c4-5 16-5 20 0-4 6-16 6-20 0Z" fill="#fff" stroke="#222" strokeWidth="1.500" />
          <circle cx="12" cy="13" r="4" fill="#222" />
          <path d="M5 8 3.500 5M9 6 8.500 3M15 6l.5-3M19 8l1.500-3" stroke="#222" strokeWidth="1.500" />
        </Svg>
      </div>
      <div className="w-[34px] flex items-center justify-center shrink-0"><Lock open s={20} /></div>
      <div className="pt-[1px]">
        <Btn className="w-[79px] h-[34px] justify-center gap-[5px] font-medium text-[11px]">·Слой 1 <Caret /></Btn>
      </div>
      <div className="pl-[1px] flex items-center whitespace-pre">
        <b>Прямоугольник</b>
        <span>  в слое </span>
        <b className="font-bold">Слой 1.</b>
        <span> Click selection again to toggle scale/rotation handles.</span>
      </div>
      <div className="ml-auto flex">
        <div className="w-[1px] h-[35px] bg-[#dcdad7]" />
        <div className="w-[68px] pl-[10px] pr-[1px] flex flex-col text-[#555]">
          <div className="h-[17px] flex justify-between items-center"><span>X:</span><span>145,08</span></div>
          <div className="h-[18px] flex justify-between items-center"><span>Y:</span><span>10,04</span></div>
        </div>
        <div className="w-[28px] pl-[8px] flex items-center text-[#555]">Z:</div>
        <div className="pt-[1px]"><Spin value="58%" w="w-[94px]" cell="w-[22px]" pad="pl-[10px]" text="text-[#2e3436]" /></div>
        <div className="w-[30px] pl-[10px] flex items-center text-[#555]">R:</div>
        <div className="pt-[1px]"><Spin value="0,00°" w="w-[101px]" cell="w-[23px]" pad="pl-[13px]" text="text-[#2e3436]" /></div>
        <div className="w-[10px]" />
      </div>
    </div>
  );
}

// ---------- windows task bar ----------
const grass = Array.from({ length: 90 }, (_, i) => {
  const x = (i * 137) % 1600;
  const lean = ((i * 53) % 30) - 15;
  const top = (i * 17) % 24;
  return `M${x} 40Q${x + lean / 2} ${top + 10} ${x + lean} ${top}`;
}).join("");

const TaskApp = ({ on, active, children }) => (
  <div className={`relative w-[48px] h-[40px] flex items-center justify-center shrink-0 ${active ? "bg-[#3c3f3d]" : ""}`}>
    {children}
    {on && <div className="absolute bottom-0 left-[1px] right-[1px] h-[2px] bg-[#76b9ed]" />}
  </div>
);

function Taskbar() {
  return (
    <div className="relative h-[40px] bg-[#0a0b07] flex items-center text-white shrink-0 overflow-hidden">
      <svg width="1600" height="40" className="absolute inset-0">
        <path d={grass} fill="none" stroke="#3a3320" strokeOpacity=".35" />
      </svg>
      <div className="relative flex items-center">
        <div className="w-[48px] flex justify-center">
          <svg width="17" height="17" viewBox="0 0 17 17"><path d="M0 2.500 7.500 1.500V8H0zM8.500 1.300 17 0V8H8.500zM0 9h7.500v6.500L0 14.500zM8.500 9H17v8l-8.500-1.300z" fill="#fff" /></svg>
        </div>
        <div className="w-[48px] flex justify-center">
          <svg width="18" height="18" viewBox="0 0 18 18"><circle cx="11" cy="7" r="5.500" fill="none" stroke="#fff" strokeWidth="1.300" /><path d="M7 11 1 17" stroke="#fff" strokeWidth="1.500" /></svg>
        </div>
        <div className="w-[48px] flex justify-center">
          <svg width="20" height="18" viewBox="0 0 20 18"><path d="M4.500 1h11v16h-11zM2 3.500H.5v11H2M18 3.500h1.500v11H18" fill="none" stroke="#fff" /></svg>
        </div>
        <div className="w-[3px]" />
        <TaskApp on>
          <Svg s={24}><path d="M3 4h7l2 2h9v16H3z" fill="#f7d774" /><path d="M3 9h18v13H3z" fill="#fbe7a1" /><path d="M8 14h8v8H8z" fill="#3aa0e0" /><path d="M11 18h2v4h-2z" fill="#fff" /></Svg>
        </TaskApp>
        <div className="w-[1px]" />
        <TaskApp on>
          <Svg s={26}><rect x="8" y="3" width="14" height="18" fill="#d8eadf" /><path d="M15 3v18M8 9h14M8 15h14" stroke="#1f7a47" /><path d="M2 5 15 2v20L2 19z" fill="#17683c" /></Svg>
          <span className="absolute left-[15px] top-[12px] text-[12px] font-bold leading-none text-white [font-family:'Liberation_Sans',sans-serif]">X</span>
        </TaskApp>
        <div className="w-[1px]" />
        <TaskApp on>
          <Svg s={28}><circle cx="11" cy="11" r="10" fill="#f5ca2a" /><circle cx="17" cy="17" r="6.500" fill="#d7d7d7" stroke="#777" /></Svg>
          <span className="absolute left-[16px] top-[13px] text-[11px] font-bold leading-none text-[#d9361e]">10</span>
        </TaskApp>
        <div className="w-[1px]" />
        <TaskApp on>
          <Svg s={25}><circle cx="12" cy="12" r="11" fill="#1e95dc" /><path d="M2 14C3 6 12 1 19 5c3 2 4 5 4 8-2 3-7 3-10 3-1-2 1-4 3-5-5-3-11-1-14 3Z" fill="#0f6fb5" /><path d="M5 19c2-5 5-8 9-8 0 3 4 6 9 4-2 5-7 8-12 8-3 0-5-2-6-4Z" fill="#5fd08a" /></Svg>
        </TaskApp>
        <TaskApp on active><Logo s={28} /></TaskApp>
        <div className="w-[1px]" />
        <TaskApp on>
          <Svg s={26}><rect x="9" y="3" width="13" height="18" fill="#e2e8f3" /><path d="M12 7h8M12 10h8M12 13h8M12 16h8" stroke="#2a5699" /><path d="M2 5 15 2v20L2 19z" fill="#2a5699" /></Svg>
          <span className="absolute left-[14px] top-[13px] text-[12px] font-bold leading-none text-white [font-family:'Liberation_Sans',sans-serif]">W</span>
        </TaskApp>
      </div>
      <div className="relative ml-auto flex items-center text-[12px]">
        <svg width="12" height="8" className="mr-[9px]"><path d="M1 7 6 1.500 11 7" fill="none" stroke="#fff" strokeWidth="1.200" /></svg>
        <svg width="18" height="18" viewBox="0 0 18 18" className="mr-[6px]"><path d="M3 1.500h14v11H3zM10 12.500v4M5 16.500h10M1 3.500h5v6H1z" fill="none" stroke="#fff" /></svg>
        <svg width="16" height="16" viewBox="0 0 16 16" className="mr-[9px]"><path d="M1 6h3l4-4v12l-4-4H1zM10.500 5c1 2 1 4 0 6M13 3c2 3 2 7 0 10" fill="none" stroke="#fff" /></svg>
        <div className="w-[28px] text-center text-[12px] mr-[8px]">РУС</div>
        <div className="w-[56px] text-center text-[12px] leading-[17px] whitespace-nowrap">
          <div>13:55</div>
          <div>31.03.2022</div>
        </div>
        <svg width="17" height="20" viewBox="0 0 17 20" className="ml-[17.500px] mr-[25px]"><path d="M.5 1h16v13H10l-3 4v-4H.5z" fill="none" stroke="#fff" /></svg>
      </div>
    </div>
  );
}

export default function App() {
  return (
    <div className={`relative w-[1600px] h-[900px] overflow-hidden flex flex-col bg-[#f6f5f4] ${FONT}`}>
      <Defs />
      <TitleBar />
      <MenuBar />
      <TopBar />
      <div className="flex h-[701px] shrink-0">
        <Toolbox />
        <WorkArea />
        <Panel />
        <RightBars />
      </div>
      <Palette />
      <PaletteScroll />
      <StatusBar />
      <Taskbar />
    </div>
  );
}
